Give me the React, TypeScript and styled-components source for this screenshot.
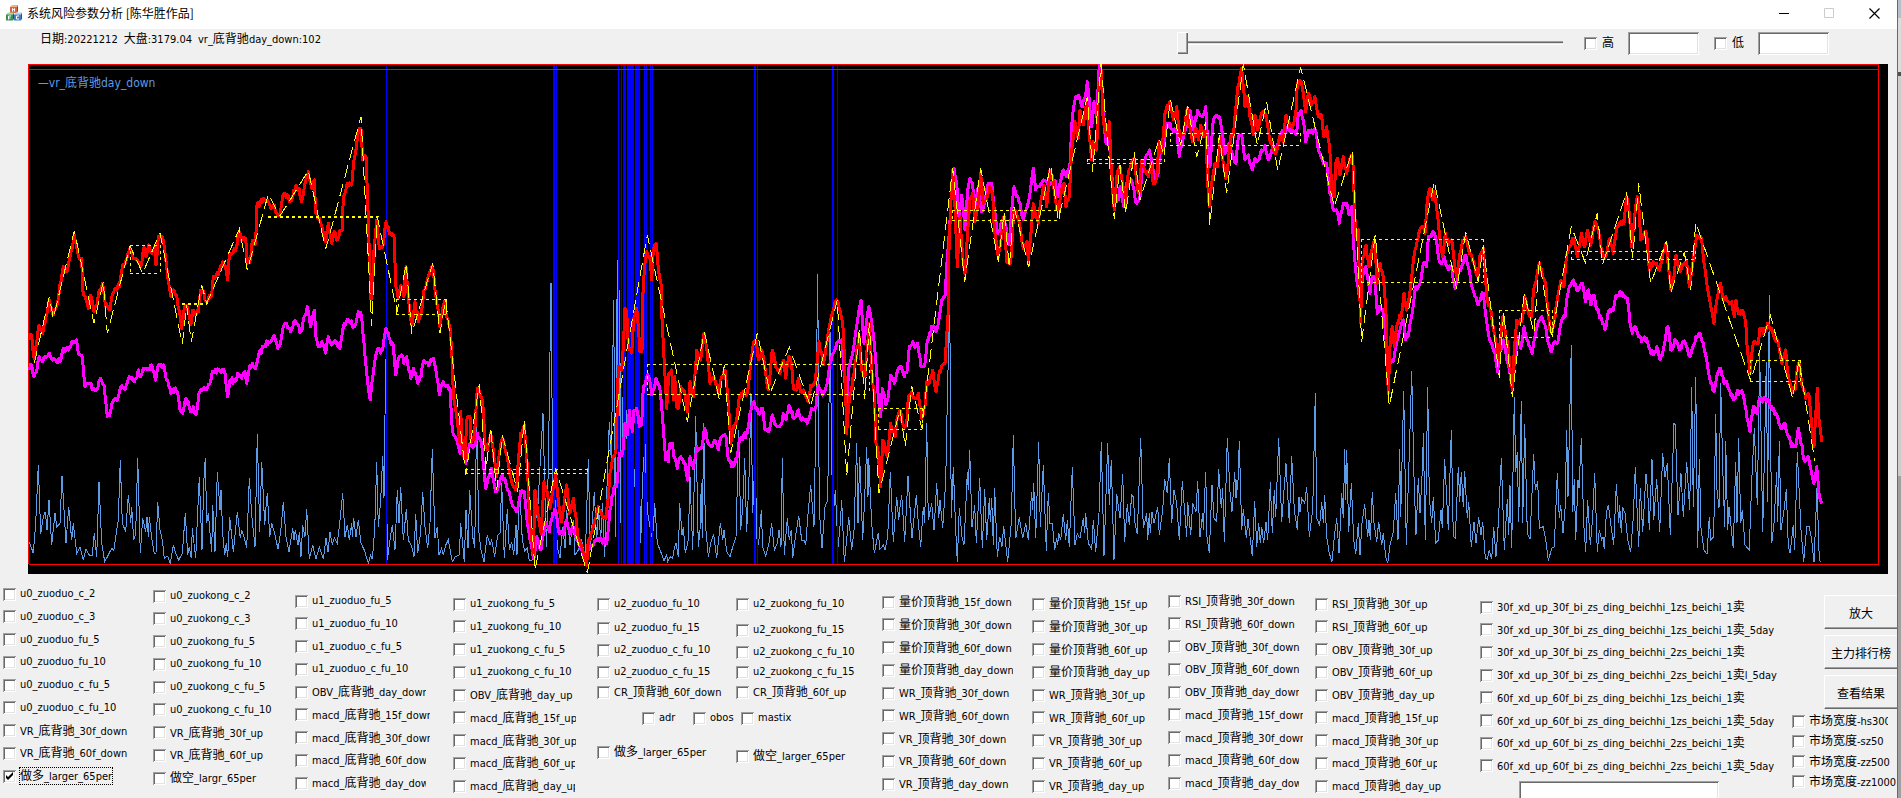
import React from "react";
import styled, { createGlobalStyle, css } from "styled-components";

const GlobalStyle = createGlobalStyle`
  html, body { margin: 0; padding: 0; overflow: hidden; background: #a8a8a8; }
  * { box-sizing: border-box; }
  body, button, input {
    font-family: "DejaVu Sans Condensed", "Noto Sans CJK SC", sans-serif;
    font-size: 11px;
    color: #000;
  }
`;

const sunken = css`
  box-shadow: inset 1px 1px #a0a0a0, inset -1px -1px #fff, inset 2px 2px #696969, inset -2px -2px #e3e3e3;
`;

const Desktop = styled.div`
  display: flex;
  height: 100vh;
`;

const AppWindow = styled.main`
  flex: 1;
  min-width: 0;
  display: flex;
  flex-direction: column;
  background: #f0f0f0;
  overflow: hidden;
`;

const Backdrop = styled.aside`
  width: 4px;
  border-left: 1px solid #696969;
  display: flex;
  flex-direction: column;
`;

const BackdropBand = styled.div<{ $h?: number; $c: string }>`
  background: ${(p) => p.$c};
  ${(p) => (p.$h ? `height: ${p.$h}px;` : "flex: 1;")}
`;

const TitleBar = styled.header`
  height: 29px;
  display: flex;
  align-items: center;
  background: #fff;
  padding: 0 0 3px 6px;
  flex: none;
`;

const Title = styled.h1`
  margin: 0 auto 0 5px;
  font: 400 12px/16px "Noto Sans CJK SC", sans-serif;
`;

const CaptionButton = styled.button`
  width: 45px;
  height: 26px;
  padding: 0;
  border: 0;
  background: none;
  display: grid;
  place-items: center;
`;

const Toolbar = styled.section`
  height: 35px;
  flex: none;
  display: flex;
  align-items: center;
  padding: 0 68px 7px 40px;
`;

const Status = styled.div`
  display: flex;
  align-self: flex-start;
  line-height: 20px;
  white-space: nowrap;
  gap: 6px;
  margin-right: auto;
`;

const Han = styled.span`
  font-size: 12px;
`;

const Slider = styled.input`
  appearance: none;
  width: 386px;
  height: 22px;
  margin: 0 21px 0 0;
  background: none;
  &::-webkit-slider-runnable-track {
    height: 4px;
    border-top: 1px solid #a0a0a0;
    border-bottom: 1px solid #fff;
    background: linear-gradient(#696969 50%, #e3e3e3 50%);
  }
  &::-webkit-slider-thumb {
    appearance: none;
    width: 11px;
    height: 22px;
    margin-top: -10px;
    background: #f0f0f0;
    box-shadow: inset 1px 1px #fff, inset -1px -1px #696969, inset -2px -2px #a0a0a0;
  }
`;

const Limits = styled.div`
  display: flex;
  gap: 15px;
`;

const Limit = styled.div`
  display: flex;
  align-items: center;
`;

const Field = styled.input<{ $w: number }>`
  width: ${(p) => p.$w}px;
  height: 23px;
  border: 0;
  padding: 2px 4px;
  background: #fff;
  ${sunken}
`;

const LimitLabel = styled.label`
  display: flex;
  align-items: center;
  gap: 5px;
  width: 44px;
  font-size: 12px;
  line-height: 16px;
`;

const Box = styled.input`
  appearance: none;
  flex: none;
  width: 13px;
  height: 13px;
  margin: 0;
  background: #fff;
  ${sunken}
  &:checked {
    background: #fff
      url("data:image/svg+xml,%3Csvg xmlns='http://www.w3.org/2000/svg' width='13' height='13'%3E%3Cpath d='M3 5v3l2 2 5-5V2L5 7z'/%3E%3C/svg%3E");
  }
`;

const ChartFrame = styled.section`
  position: relative;
  height: 510px;
  flex: none;
  margin: 0 9px 0 28px;
  background: #000;
`;

const Plot = styled.svg`
  display: block;
  width: 100%;
  height: 100%;
`;

const Legend = styled.span`
  position: absolute;
  left: 10px;
  top: 10px;
  color: #5c9ce6;
  font-size: 12px;
  line-height: 18px;
`;

const Panel = styled.section`
  flex: 1;
  min-height: 0;
  display: grid;
  align-items: start;
  grid-template-columns:
    minmax(0, 150fr) minmax(0, 142fr) minmax(0, 158fr) minmax(0, 144fr) minmax(0, 285fr) minmax(0, 150fr)
    minmax(0, 136fr) minmax(0, 147fr) minmax(0, 165fr) minmax(0, 312fr) minmax(0, 105fr);
  padding-left: 3px;
`;

const Column = styled.div<{ $top: number; $h: number }>`
  display: flex;
  flex-direction: column;
  justify-content: space-between;
  margin-top: ${(p) => p.$top}px;
  height: ${(p) => p.$h}px;
`;

const Option = styled.label`
  display: flex;
  align-items: center;
  gap: 4px;
  height: 14px;
`;

const OptionText = styled.span<{ $clip?: number; $focus?: boolean }>`
  white-space: nowrap;
  line-height: 16px;
  height: 16px;
  ${(p) => p.$clip && `width: ${p.$clip}px; overflow: hidden;`}
  ${(p) => p.$focus && "outline: 1px dotted #000;"}
`;

const Middle = styled.div`
  margin-top: 23px;
`;

const Pair = styled.div`
  display: grid;
  grid-template-columns: minmax(0, 139fr) minmax(0, 146fr);
`;

const Rows = styled.div<{ $rows: string }>`
  display: grid;
  grid-template-rows: ${(p) => p.$rows};
`;

const Breadth = styled.div`
  display: grid;
  grid-template-columns: 51px 48px auto;
  padding: 12px 0 20px 45px;
`;

const Signals = styled.div`
  & > input { margin: 8px 0 0 39px; }
`;

const Actions = styled.div`
  margin-top: 21px;
`;

const ButtonStack = styled.div`
  display: flex;
  flex-direction: column;
  gap: 6px;
  padding-left: 32px;
`;

const PushButton = styled.button`
  height: 34px;
  padding: 0;
  border: solid;
  border-width: 1px 0 1px 1px;
  border-color: #fff #fff #696969;
  background: #f0f0f0;
  box-shadow: inset 0 -1px #a0a0a0;
  font-size: 12px;
  white-space: nowrap;
`;

/* Chinese characters are set one size larger than the Latin text beside them. */
function Mixed({ text }: { text: string }) {
  return (
    <>
      {text
        .split(/([\u4e00-\u9fff]+)/)
        .filter(Boolean)
        .map((part, i) => (/[\u4e00-\u9fff]/.test(part) ? <Han key={i}>{part}</Han> : part))}
    </>
  );
}

type Item = string | { text: string; clip?: number; checked?: boolean };

function Check({ item }: { item: Item }) {
  const o = typeof item === "string" ? { text: item } : item;
  return (
    <Option>
      <Box type="checkbox" defaultChecked={o.checked} />
      <OptionText $clip={o.clip} $focus={o.checked}>
        <Mixed text={o.text} />
      </OptionText>
    </Option>
  );
}

function CheckColumn({ top, items, height = 196 }: { top: number; items: Item[]; height?: number }) {
  return (
    <Column $top={top} $h={height}>
      {items.map((it, i) => (
        <Check key={i} item={it} />
      ))}
    </Column>
  );
}

const u0Long: Item[] = [
  "u0_zuoduo_c_2", "u0_zuoduo_c_3", "u0_zuoduo_fu_5", "u0_zuoduo_fu_10", "u0_zuoduo_c_fu_5", "u0_zuoduo_c_fu_10",
  "VR_底背驰_30f_down", "VR_底背驰_60f_down", { text: "做多_larger_65per", checked: true },
];
const u0Short: Item[] = [
  "u0_zuokong_c_2", "u0_zuokong_c_3", "u0_zuokong_fu_5", "u0_zuokong_fu_10", "u0_zuokong_c_fu_5", "u0_zuokong_c_fu_10",
  "VR_底背驰_30f_up", "VR_底背驰_60f_up", "做空_largr_65per",
];
const u1Long: Item[] = [
  "u1_zuoduo_fu_5", "u1_zuoduo_fu_10", "u1_zuoduo_c_fu_5", "u1_zuoduo_c_fu_10",
  { text: "OBV_底背驰_day_down", clip: 114 }, { text: "macd_底背驰_15f_down", clip: 118 },
  { text: "macd_底背驰_30f_down", clip: 118 }, { text: "macd_底背驰_60f_down", clip: 114 },
  { text: "macd_底背驰_day_down", clip: 114 },
];
const u1Short: Item[] = [
  "u1_zuokong_fu_5", "u1_zuokong_fu_10", "u1_zuokong_c_fu_5", "u1_zuokong_c_fu_10", "OBV_底背驰_day_up",
  { text: "macd_底背驰_15f_up", clip: 106 }, { text: "macd_底背驰_30f_up", clip: 106 },
  { text: "macd_底背驰_60f_up", clip: 105 }, { text: "macd_底背驰_day_up", clip: 105 },
];
const u2Long: Item[] = ["u2_zuoduo_fu_10", "u2_zuoduo_fu_15", "u2_zuoduo_c_fu_10", "u2_zuoduo_c_fu_15", "CR_顶背驰_60f_down"];
const u2Short: Item[] = ["u2_zuokong_fu_10", "u2_zuokong_fu_15", "u2_zuokong_c_fu_10", "u2_zuokong_c_fu_15", "CR_顶背驰_60f_up"];
const volumeDown: Item[] = [
  "量价顶背驰_15f_down", "量价顶背驰_30f_down", "量价顶背驰_60f_down", { text: "量价顶背驰_day_down", clip: 114 },
  "WR_顶背驰_30f_down", "WR_顶背驰_60f_down", "VR_顶背驰_30f_down", "VR_顶背驰_60f_down", "VR_顶背驰_day_down",
];
const volumeUp: Item[] = [
  "量价顶背驰_15f_up", "量价顶背驰_30f_up", "量价顶背驰_60f_up", "量价顶背驰_day_up",
  "WR_顶背驰_30f_up", "WR_顶背驰_60f_up", "VR_顶背驰_30f_up", "VR_顶背驰_60f_up", "VR_顶背驰_day_up",
];
const rsiDown: Item[] = [
  "RSI_顶背驰_30f_down", "RSI_顶背驰_60f_down", "OBV_顶背驰_30f_down", { text: "OBV_顶背驰_60f_down", clip: 114 },
  { text: "OBV_顶背驰_day_down", clip: 114 }, { text: "macd_顶背驰_15f_down", clip: 118 },
  { text: "macd_顶背驰_30f_down", clip: 118 }, { text: "macd_顶背驰_60f_down", clip: 114 },
  { text: "macd_顶背驰_day_down", clip: 114 },
];
const rsiUp: Item[] = [
  "RSI_顶背驰_30f_up", "RSI_顶背驰_60f_up", "OBV_顶背驰_30f_up", "OBV_顶背驰_60f_up", "OBV_顶背驰_day_up",
  { text: "macd_顶背驰_15f_up", clip: 106 }, { text: "macd_顶背驰_30f_up", clip: 106 },
  { text: "macd_顶背驰_60f_up", clip: 105 }, "macd_顶背驰_day_up",
];
const signals: Item[] = [
  "30f_xd_up_30f_bi_zs_ding_beichhi_1zs_beichi_1卖", "30f_xd_up_30f_bi_zs_ding_beichhi_1zs_beichi_1卖_5day",
  "30f_xd_up_30f_bi_zs_ding_beichhi_2zs_beichi_1卖", "30f_xd_up_30f_bi_zs_ding_beichhi_2zs_beichi_1卖l_5day",
  "60f_xd_up_60f_bi_zs_ding_beichhi_1zs_beichi_1卖", "60f_xd_up_60f_bi_zs_ding_beichhi_1zs_beichi_1卖_5day",
  "60f_xd_up_60f_bi_zs_ding_beichhi_2zs_beichi_1卖", "60f_xd_up_60f_bi_zs_ding_beichhi_2zs_beichi_1卖_5day",
];
const breadth: Item[] = [{ text: "市场宽度-hs300", clip: 79 }, "市场宽度-sz50", "市场宽度-zz500", "市场宽度-zz1000"];

/* Chart samples are kept per tile, three units to a chart pixel, measured from the tile's origin. */
type Tile = "a1" | "a2" | "a3" | "a4" | "b1" | "b2" | "b3" | "b4";
const origin: Record<Tile, [number, number]> = {
  a1: [0, 0], a2: [470, 50], a3: [940, 50], a4: [1400, 0],
  b1: [0, 310], b2: [470, 310], b3: [940, 310], b4: [1400, 310],
};
type Run = [Tile, string];
type Point = [number, number];

const decode = (runs: Run[]): Point[] =>
  runs.flatMap(([tile, pts]) =>
    pts.split(" ").map((p): Point => {
      const [x, y] = p.split(",").map(Number);
      return [origin[tile][0] + x / 3, origin[tile][1] + y / 3];
    })
  );

const toPoints = (pts: Point[]) => pts.map(([x, y]) => `${x.toFixed(1)},${y.toFixed(1)}`).join(" ");

/* Adds the bar-to-bar wobble of a daily series between its turning points. */
const wobble = (pts: Point[]): Point[] => {
  let seed = 7;
  const next = () => {
    seed = (seed * 16807) % 2147483647;
    return seed / 2147483647 - 0.5;
  };
  return pts.flatMap(([x, y], i): Point[] => {
    const [nx, ny] = pts[i + 1] ?? [x, y];
    const n = Math.max(1, Math.floor(nx - x));
    return Array.from({ length: n }, (_, k): Point => [
      x + ((nx - x) * k) / n,
      y + ((ny - y) * k) / n + (k ? next() * 6 : 0),
    ]);
  });
};

const indexLine: Run[] = [
  ["b1", "88,90 95,75 102,145 110,100 117,45 128,70 138,20"],
  ["a1", "148,900 160,945 170,920 190,800 202,815 213,755 223,705 232,750 240,780 245,775 248,870 258,900 265,925 272,885 282,935 292,910 298,870 308,850 318,920 330,930 335,890 347,865 358,860 368,795 380,780 390,745 400,775 412,780 422,800 432,740 438,770 446,735 455,760 465,740 468,795 475,710 486,708 493,740 500,800 505,845 513,890 520,870 530,885 537,930 545,985 552,930 560,915 572,975 578,930 585,945 595,935 602,870 612,880 618,905 628,885 635,885 640,830 655,825 665,795 675,795 683,840 688,765 700,755 710,740 718,695 728,720 737,715 742,790 752,775 757,720 767,730 770,620 780,610 790,595 800,600 812,625 820,615 830,640 840,645 848,590 862,585 868,605 878,590 888,555 897,565 905,605 913,560 925,515 935,565 943,540 947,640 958,655 968,690 977,725 985,670 995,730 1003,695 1012,720 1020,690 1027,690 1030,590 1040,555 1055,555 1062,480 1075,395 1083,385 1088,480 1098,470 1103,600 1108,760 1113,900 1117,880 1122,750 1130,660 1138,745 1148,740 1158,665 1168,700 1182,710 1188,860 1195,895 1203,855 1212,890 1218,800 1225,890 1235,975 1245,905 1255,965 1265,930 1272,870 1280,850 1298,800 1305,870 1315,930 1320,980 1333,905 1340,950 1350,985"],
  ["b1", "1355,120 1360,250 1372,330 1380,400 1382,305 1388,430 1395,450 1400,330 1410,320 1410,380"],
  ["b2", "12,390 22,235 38,275 45,400 52,420 62,370 70,420 80,500 85,450 97,385 108,430 118,480 130,530 140,535 145,450 152,370 163,345 170,440 175,530 180,640 190,735 195,540 205,620 213,670 222,515 232,545 240,595 248,540 257,495 265,570 275,635 283,580 290,525 298,610 310,565 318,620 325,690 335,710 345,745 350,765 355,690 370,650 385,590 395,615 408,625 415,560 420,490 430,440 438,420 445,170 455,180 460,110 465,-5 470,5 475,105 485,130 492,20 500,-5 510,125 516,125"],
  ["a2", "518,745 523,660 530,605 540,620 545,690 550,600 558,580 565,655 573,700 575,790"],
  ["b2", "580,100 590,295 597,190 605,180 610,270 614,200 620,290 625,295 632,230 642,240 652,305 660,215 670,260 680,120 692,150 702,70 712,130 720,220 732,200 747,245 755,200 765,180 772,240 778,320 782,400 792,345 800,330 808,260 820,245 832,250 840,180 850,100 858,95 865,150 875,120 887,190 895,240 907,120 917,170 930,190 940,150 947,205 957,140 965,165 970,235 980,240 985,205 992,245 1000,240 1015,275 1022,225 1035,215 1040,170 1047,95 1060,165 1068,110 1078,50 1087,10 1100,-30 1112,10 1120,60 1127,250 1130,370 1137,280 1145,240 1155,160 1168,80 1175,180 1185,200 1190,130 1198,40 1205,180 1213,250 1218,400 1225,430 1232,530 1238,390 1252,440 1262,340 1275,380 1280,330 1290,300 1300,345 1310,345 1315,260 1325,245 1335,265 1345,250 1355,325 1365,290 1370,215 1378,220 1388,180 1398,245 1408,185 1425,160 1430,80 1435,0"],
  ["a3", "27,600 32,470 38,360 45,470 52,650 60,500 68,620 75,670 82,560 90,450 98,430 105,515 115,460 122,370 130,460 140,450 150,410 158,430 163,540 175,620 185,550 192,500 200,635 212,640 222,480 232,500 240,530 250,595 262,575 265,635 272,560 280,460 287,500 295,520 303,450 312,405 320,470 330,360 340,395 350,480 357,480 365,420 372,400 378,470 388,440 395,300 405,215 415,265 420,180 430,225 440,150 447,240 455,330 460,275 470,300 475,130 483,60 490,220 500,260 508,215 515,380 523,480 532,365 540,350 548,400 556,470 565,365 578,330 585,340 590,400 597,430 605,330 615,360 625,380 633,340 640,400 650,385 657,275 665,310 675,190 690,155 700,210 710,170 720,265 732,250 742,175 750,230 758,275 768,235 775,270 782,225 790,260 797,240 803,400 808,470 815,400 825,340 833,350 840,260 850,340 858,385 868,300 873,255 880,260 885,200 893,110 905,55 915,170 922,140 932,210 940,255 945,195 953,240 965,190 978,195 985,240 992,280 1000,300 1010,305 1018,260 1030,275 1038,195 1050,230 1060,225 1068,180 1072,100 1080,90 1090,130 1097,185 1105,130 1115,165 1125,140 1135,200 1145,195 1152,260 1160,230 1170,310 1177,440 1183,440 1187,340 1193,325 1200,375 1210,320 1220,370 1230,325 1238,320 1243,450 1247,560 1255,540 1258,680 1262,820 1266,640 1278,585 1287,650 1295,600 1303,570 1312,700 1320,640 1330,680 1338,790"],
  ["b3", "1340,120 1345,250 1350,110 1357,50 1363,110 1372,40 1385,10"],
  ["a4", "12,880 20,930 28,890 38,800 45,750 55,710 65,680 75,700 82,600 90,565 97,600 103,575 112,640 118,700 128,770 136,700 145,735 155,720 165,800 170,830 180,760 188,720 197,710 205,745 215,765 225,800 235,830 240,765 250,745 255,820 262,900 270,920 280,985"],
  ["b4", "285,80 295,150 300,100 308,20 315,60 325,120 337,240 343,120 350,30 357,40"],
  ["a4", "365,965 375,890 385,935 395,950 400,880 410,830 418,790 427,825 438,860 442,920 450,990 456,1000 465,950 475,880 483,840 492,860 497,790 505,750 520,715 532,770 545,700 553,740 562,690 572,735 585,665 595,690 605,760 615,775 622,750 630,715 640,760 650,680 662,665 672,670 680,590 688,640 695,740 703,660 712,590 718,640 722,720 732,700 740,700 748,810 760,785 770,790 778,810 785,780 798,730 805,800 813,870 822,830 828,765 840,815 850,795 860,785 868,860 875,810 885,740 890,705 905,720 912,790 920,850 932,920 942,970 950,900 962,850 970,900 978,890 985,905 995,905 1003,950 1008,900 1015,940 1028,930 1038,980"],
  ["b4", "1042,120 1050,190 1058,110 1065,95 1075,100 1080,55 1090,70 1103,40 1115,55 1125,90 1135,100 1145,160 1157,120 1163,190 1175,240 1185,240 1190,190 1198,155 1207,230 1217,265 1227,255 1233,320 1242,410 1248,300 1252,235 1258,340 1265,395"],
];

const marketLine: Run[] = [
  ["b1", "88,180 95,165 102,200 110,185 117,140 128,155 135,140 148,130 160,150 180,155 190,115 205,120 215,95 230,90 237,135 247,140 255,230 270,220 280,235 290,240 298,210 312,225 322,320 332,305 338,275 355,260 362,230 375,240 388,200 400,210 410,205 415,180 422,200 430,175 445,175 455,165 467,210 475,165 490,165 500,210 513,250 523,235 532,245 540,300 548,310 556,270 565,275 572,305 580,290 588,315 597,250 615,240 622,235 630,220 637,185 660,180 675,190 683,260 690,210 705,215 713,190 725,205 735,185 740,220 747,180 757,160 767,175 775,140 790,110 805,95 822,75 833,115 843,90 850,50 860,40 872,65 885,30 903,65 912,20 922,-10 932,50 943,0 948,80 955,110 965,95 977,130 985,80 995,105 1005,90 1020,115 1030,50 1045,30 1063,50 1075,5 1085,20 1092,100 1100,190 1111,270 1120,190 1130,125 1148,120 1158,55 1170,90 1180,105 1187,195 1195,145 1205,135 1212,160 1220,140 1232,205 1240,175 1253,220 1263,200 1270,155 1290,160 1300,145 1310,200 1318,255 1330,215 1350,235 1357,360 1370,390 1380,430 1385,400 1397,460 1405,420 1410,400"],
  ["b2", "12,410 22,370 35,400 42,480 48,535 57,500 65,475 77,545 88,520 97,495 108,520 118,545 125,580 140,605 152,545 163,545 172,640 182,700 192,745 200,680 213,720 225,640 238,665 248,610 257,600 265,660 280,675 290,630 300,670 310,650 322,690 335,720 348,760 357,715 370,705 383,685 395,690 410,700 420,600 432,530 440,530 448,430 458,430 465,340 472,375 478,300 487,365 492,300 500,295 508,350 515,345 520,230 530,200 538,205 545,255 558,205 570,240 578,330 587,450 595,455 598,405 607,400 612,440 622,475 632,440 645,460 653,510 660,440 670,475 680,410 695,415 703,355 715,400 725,410 735,390 745,420 755,380 768,380 775,450 785,470 800,450 808,390 832,370 840,310 852,275 865,310 878,295 885,360 895,365 907,315 918,345 932,345 940,310 948,330 957,285 972,325 985,300 995,330 1012,340 1025,295 1038,290 1045,225 1058,255 1072,220 1080,160 1090,130 1100,100 1115,90 1120,150 1130,280 1137,170 1150,120 1160,50 1173,-30 1182,100 1190,30 1197,-10 1207,50 1217,150 1225,265 1232,320 1237,235 1248,285 1255,260 1262,195 1273,220 1280,190 1290,170 1303,200 1312,180 1318,110 1328,95 1338,110 1343,100 1353,170 1365,160 1372,90 1388,50 1398,65 1408,20"],
  ["a3", "5,750 15,740 20,650 27,560 33,450 42,355 50,400 57,500 65,435 75,540 83,420 90,385 97,400 107,470 115,410 125,485 135,450 145,400 155,400 163,480 173,550 183,520 193,500 208,585 215,480 222,410 230,440 240,460 250,510 262,470 270,430 280,355 287,420 298,410 310,390 330,400 345,390 353,440 370,360 380,380 390,340 397,200 405,150 415,135 427,170 433,150 442,95 447,140 455,230 462,155 470,200 478,45 483,60 490,190 498,280 505,240 515,370 523,450 535,450 540,410 552,470 560,400 575,390 590,460 600,440 607,360 615,330 628,300 637,340 645,390 655,370 660,290 670,300 678,230 690,220 700,245 710,240 718,320 730,260 742,230 750,180 760,240 773,180 787,200 797,170 803,280 810,350 820,210 837,200 847,250 855,310 868,280 880,320 888,340 895,260 905,255 915,330 925,315 937,360 945,325 955,330 965,300 975,285 985,330 995,300 1010,290 1020,255 1040,240 1055,235 1070,250 1075,190 1083,180 1090,210 1097,275 1105,240 1118,250 1127,240 1135,300 1150,340 1160,340 1170,430 1180,480 1190,480 1198,520 1208,470 1220,460 1227,495 1235,470 1242,600 1250,690 1258,740 1268,680 1277,650 1290,730 1297,680 1305,690 1312,790 1322,770 1330,780"],
  ["b3", "1340,120 1350,160 1363,140 1375,80 1390,30 1397,90 1408,60 1418,0"],
  ["a4", "45,870 60,850 70,790 80,800 85,710 93,710 100,695 110,725 118,785 125,790 133,770 145,810 155,800 165,865 175,820 188,795 195,765 205,800 213,850 225,890 235,915 250,880 258,950 265,1000"],
  ["b4", "275,100 285,130 293,185 300,120 310,90 320,150 335,220 345,150 355,80 362,115 372,50 383,90 397,130 405,80 415,35 425,20 437,50 445,100 455,125 465,95 475,90 483,40 495,20"],
  ["a4", "500,900 508,860 520,840 530,870 547,850 557,905 565,870 572,915 582,885 592,930 605,960 615,990 625,935 640,930 648,885 660,875 670,890 682,895 690,970"],
  ["b4", "697,70 705,50 725,95 740,85 750,120 760,135 770,110 780,150 790,120 800,55 806,60 812,120 828,90 840,120 850,95 862,115 870,140 878,110 888,80 900,70 910,100 920,150 930,210 942,245 950,200 962,175 972,220 980,215 990,245 1000,270 1010,250 1028,250 1038,300 1050,365 1060,290 1072,310 1078,265 1095,270 1105,270 1118,300 1133,320 1143,355 1155,340 1165,380 1175,410 1187,410 1195,355 1203,400 1213,450 1225,440 1233,480 1242,520 1250,470 1258,560 1267,573"],
];

const signalLine: Run[] = [
  ["b1", "88,695 100,730 107,640 115,465 122,672 130,620 136,605 141,660 147,570 155,705 165,610 170,650 180,640 186,497 198,700 206,590 215,690 220,640 230,730 240,710 250,750 258,718 268,735 277,735 283,668 290,740 297,516 305,700 314,755 325,735 335,715 341,722 350,660 355,630 361,450 367,640 377,665 385,555 392,640 395,590 401,690 407,670 413,443 421,730 428,625 437,665 441,620 445,680 448,620 455,685 463,730 468,730 473,575 480,660 487,690 493,745 503,738 511,762 520,705 527,730 536,750 547,730 556,610 563,735 568,710 574,745 577,655 587,745 593,605 598,500 606,720 611,520 616,443 620,640 625,610 635,725 638,585 645,725 652,485 660,600 663,540 668,670 674,735 679,700 683,742 689,620 700,725 712,605 721,685 725,660 732,680 740,715 748,505 756,625 765,710 772,372 779,665 785,455 794,645 798,590 802,548 809,680 815,640 824,670 834,718 842,665 850,575 858,680 867,725 878,655 882,690 886,660 894,705 898,665 903,740 908,645 915,680 920,598 928,748 938,705 948,748 958,710 970,748 978,685 984,725 990,665 997,705 1003,683 1012,700 1018,650 1028,550 1035,680 1042,645 1048,690 1055,640 1057,680 1061,625 1068,680 1075,630 1083,700 1093,720 1105,760 1112,735 1117,748 1124,660 1130,455 1135,650 1142,570 1148,438 1152,565 1157,147 1162,750 1170,690 1177,645 1185,720 1192,540 1197,640 1202,530 1210,690 1219,598 1225,690 1235,710 1242,740 1247,612 1253,730 1262,665 1268,545 1275,650 1283,715 1290,640 1297,417 1305,685 1312,650 1317,735 1325,715 1330,735 1337,705 1345,690 1357,755 1366,740 1378,735 1382,640 1393,755 1398,600 1404,715 1409,540"],
  ["b2", "3,600 8,680 14,715 20,310 26,660 32,715 42,755 52,675 60,705 65,690 74,740 83,675 90,670 95,520 103,745 112,598 118,720 125,695 131,735 138,645 141,735 149,540 157,690 164,722 172,715 178,752 186,750 193,650 203,600 210,470 219,310 226,600 230,710 236,400 243,-80 248,500 252,640 256,570 262,710 270,745 278,650 285,715 290,600 300,705 310,630 315,735 325,720 335,690 346,745 350,600 355,447 361,720 373,547 380,690 386,600 392,690 397,578 404,740 412,500 418,335 424,450 431,-30 436,680 442,-150 446,500 449,-60 452,640 457,260 463,600 470,300 475,650 485,300 494,530 503,200 512,700 518,500 525,400 532,600 538,640 545,680 550,660 554,580 562,700 572,725 582,752 590,735 593,755 600,740 608,745 613,715 618,700 625,740 629,580 636,675 640,650 646,730 655,690 660,500 668,720 677,318 685,710 690,660 694,520 697,685 701,340 706,640 715,740 722,700 731,672 740,745 751,640 758,690 762,660 770,725 780,740 790,705 798,680 806,360 812,660 818,590 824,445 830,665 838,480 843,250 848,610 855,440 862,720 868,680 874,600 878,710 887,738 897,700 905,640 913,720 922,700 927,660 933,710 937,445 943,735 952,625 958,690 964,660 968,745 975,690 986,618 995,690 1003,690 1007,705 1015,600 1022,525 1032,650 1038,300 1043,-108 1048,600 1056,715 1065,590 1073,570 1080,60 1088,640 1096,540 1104,710 1110,650 1115,570 1123,757 1130,690 1136,620 1145,720 1152,660 1160,400 1164,640 1169,440 1178,690 1184,560 1190,410 1194,560 1196,445 1205,640 1213,730 1225,668 1230,718 1240,705 1245,720 1253,680 1261,485 1270,695 1280,560 1286,630 1290,590 1295,555 1304,695 1314,498 1326,685 1339,555 1345,640 1352,710 1360,590 1364,640 1370,340 1375,630 1385,580 1392,660 1400,520 1406,625"],
  ["b3", "0,570 8,655 17,515 22,270 29,-30 34,625 40,470 47,660 52,755 58,595 66,680 72,705 82,487 85,540 89,420 96,650 104,585 109,700 119,505 127,715 134,538 140,690 148,565 151,635 155,565 160,705 164,535 172,740 179,680 186,710 191,648 203,755 214,640 220,375 227,685 238,622 248,685 257,640 265,690 275,545 278,600 281,520 287,685 296,396 301,650 310,465 319,722 325,550 330,640 337,640 344,720 350,685 353,705 356,668 362,690 370,612 377,690 382,630 388,710 397,470 405,705 412,672 420,685 430,625 434,670 437,610 445,700 455,718 460,630 467,725 477,610 484,396 492,738 503,398 508,585 514,450 522,750 530,552 540,625 548,492 554,695 562,583 568,645 575,555 580,560 585,640 592,672 602,385 610,655 620,610 623,690 628,610 631,670 636,605 642,640 653,590 658,675 668,600 674,508 682,550 688,445 695,640 702,540 710,580 718,690 727,513 740,680 743,575 752,675 758,580 768,605 773,513 780,680 788,610 790,660 797,485 801,680 808,728 816,525 822,625 830,635 836,477 844,595 848,535 853,695 862,385 870,545 876,605 884,487 888,565 890,510 893,540 898,393 905,660 910,598 919,685 924,628 937,738 944,573 950,710 956,640 961,700 965,650 971,700 978,635 983,690 991,517 997,670 1003,540 1007,620 1016,385 1025,635 1038,460 1048,640 1055,438 1063,600 1072,660 1077,560 1080,605 1085,565 1094,580 1100,530 1108,680 1118,600 1126,250 1130,625 1139,645 1145,575 1150,640 1154,555 1160,680 1168,730 1176,755 1183,680 1190,625 1197,730 1205,550 1210,625 1214,418 1217,570 1220,420 1226,665 1234,520 1241,690 1247,733 1255,640 1260,735 1266,640 1274,583 1283,680 1287,630 1291,690 1297,545 1302,640 1310,695 1316,635 1325,705 1330,668 1337,740 1343,760 1350,705 1360,665 1367,550 1374,690 1379,417 1382,620 1391,243 1399,705 1408,430 1415,183 1422,500 1428,675 1435,505"],
  ["b4", "60,610 68,460 70,370 76,690 83,230 88,560 95,640 100,560 107,700 115,690 123,600 127,655 134,448 145,660 154,360 160,680 166,685 175,470 179,575 184,485 190,590 194,483 202,625 206,575 214,710 222,635 228,700 236,622 243,675 248,635 256,745 262,748 268,720 275,748 281,650 288,740 295,640 304,445 313,720 322,568 326,675 330,525 335,715 343,262 347,485 352,425 356,635 364,273 368,640 374,343 382,670 390,688 401,433 406,540 413,513 418,655 430,650 437,690 445,752 455,715 463,710 472,490 478,625 482,585 489,670 495,600 500,360 504,560 514,105 518,605 523,508 527,690 534,510 537,535 544,385 551,640 557,725 563,570 571,705 578,620 584,490 592,725 598,660 605,690 609,680 613,718 619,610 625,585 632,640 641,705 649,523 656,640 659,585 664,668 668,592 675,610 683,690 692,727 700,620 706,472 716,712 721,535 728,665 738,492 743,540 748,660 756,448 761,630 770,508 779,665 788,430 795,500 802,460 811,675 822,340 826,345 834,615 843,490 850,620 860,455 869,600 875,230 880,590 887,200 893,715 898,448 903,655 912,720 921,733 928,620 932,690 941,680 947,312 951,540 957,595 962,220 968,470 974,650 977,393 983,660 987,590 1000,715 1007,455 1011,640 1016,385 1022,640 1027,600 1035,705 1048,720 1055,515 1063,355 1072,585 1079,130 1088,665 1094,400 1099,155 1103,575 1108,-45 1115,700 1122,640 1130,485 1133,635 1138,393 1143,660 1152,600 1159,538 1165,710 1170,730 1180,645 1184,720 1192,425 1203,660 1211,755 1220,650 1228,650 1235,690 1242,757 1251,535 1258,750 1262,755"],
];

const zigzag: Run[] = [
  ["a1", "103,1090 148,890 160,955 223,692 282,970 310,845 322,1000 390,738 428,820 480,698 547,1032 560,915 574,1027 605,855 620,910 718,687 742,810 805,583 840,648 925,512 977,748 1083,350 1115,977 1132,650 1191,937 1219,790 1235,1002 1298,790 1320,1000 1337,898"],
  ["b1", "1397,495"],
  ["b2", "28,222 48,480 62,355 80,540 97,375 143,545 163,330 195,780 257,475 352,790"],
  ["a2", "532,555"],
  ["b2", "652,335 703,65 748,268 763,165 782,430 862,70 900,250 958,112 1022,290 1102,-30 1130,500 1168,55 1184,268 1198,40 1227,548 1290,298 1306,410 1325,228 1355,355"],
  ["a3", "38,355 74,695 122,355 175,635 193,485 208,652 222,470 266,652 332,345 355,510 442,140 458,367 483,42 523,507 540,345 557,490 583,307 600,450 658,265 672,320 691,148 722,285 743,167 770,322 797,215 809,525 838,255 860,430 910,42 952,285 980,155 1013,362 1082,52 1183,470 1237,302 1265,875 1306,553"],
  ["b3", "1348,288"],
  ["a4", "103,545 170,867 197,697 235,845 250,735 298,1133 311,935 337,1190 373,880 402,1000 418,782 455,1010 514,680 556,787 592,640 608,793 680,577 698,775 716,550 752,850 800,722 812,880 853,757 872,870 887,668"],
  ["b4", "1052,213 1111,15 1178,265 1197,150 1244,452"],
];

/* Consolidation zones: x, y, width, height */
const zones = [
  [130, 245, 30, 28], [182, 303, 25, 1], [268, 216, 110, 1], [396, 299, 50, 15], [465, 469, 122, 4],
  [647, 364, 222, 30], [878, 408, 44, 21], [952, 210, 107, 10], [1087, 159, 77, 4], [1170, 133, 130, 12],
  [1361, 239, 122, 43], [1499, 310, 53, 27], [1571, 251, 124, 8], [1750, 360, 50, 21],
];

/* Signal days: x, width */
const bars = [
  [386, 1], [553, 2], [556, 1], [618, 1], [621, 1], [623, 3], [627, 7], [635, 5], [644, 1],
  [646, 1], [650, 1], [652, 1], [754, 2], [757, 1], [832, 2], [837, 1],
];

function Chart() {
  return (
    <ChartFrame aria-label="vr_底背驰day_down">
      <Plot viewBox="28 64 1860 510" preserveAspectRatio="none" shapeRendering="crispEdges" fill="none">
        <polyline points={toPoints(decode(signalLine))} stroke="#5c9ce6" />
        {bars.map(([x, w]) => (
          <rect key={x} x={x} y="65" width={w} height="499" fill="#00f" />
        ))}
        <path d="M28.5 564V64.5H1878.5V564.5H28.5M28 69.5H1878" stroke="#f00" />
        <polyline points={toPoints(wobble(decode(marketLine)))} stroke="#f0f" strokeWidth="3" strokeLinejoin="round" />
        <polyline points={toPoints(wobble(decode(indexLine)))} stroke="#f00" strokeWidth="3" strokeLinejoin="round" />
        <polyline points={toPoints(decode(zigzag))} stroke="#ff0" strokeDasharray="13 6" />
        {zones.map(([x, y, w, h]) => (
          <path
            key={x}
            d={`M${x} ${y + 0.5}h${w}M${x} ${y + h + 0.5}h${w}M${x + 0.5} ${y}v${h}M${x + w + 0.5} ${y}v${h}`}
            stroke="#ff0"
            strokeDasharray="3 3"
          />
        ))}
      </Plot>
      <Legend>—vr_底背驰day_down</Legend>
    </ChartFrame>
  );
}

function Cube({ x, y, top, face, side, mark }: { x: number; y: number; top: string; face: string; side: string; mark: string }) {
  return (
    <g transform={`translate(${x} ${y})`}>
      <path d="M0 2 2 0h6l-1 2z" fill={top} />
      <path d="M7 2 8 0v6L7 8z" fill={side} />
      <path d="M0 2h7v6H0z" fill={face} />
      <path d={mark} stroke="#fff" fill="none" />
    </g>
  );
}

function AppIcon() {
  return (
    <svg width="16" height="16" viewBox="0 0 16 16" aria-hidden="true">
      <Cube x={4} y={0} top="#f3b08c" face="#d9653a" side="#8f3f22" mark="M2.500 6.500v-3l1 1 1-1v3" />
      <Cube x={0} y={7.5} top="#a9d6a4" face="#3d8f56" side="#22593a" mark="M2.500 7v-3.500h2.500M2.500 5.500h2" />
      <Cube x={8} y={7.5} top="#b5d3f2" face="#3f7fc4" side="#2a4f80" mark="M5 3.500h-2.500v3h2.500" />
    </svg>
  );
}

export default function App() {
  return (
    <Desktop>
      <GlobalStyle />
      <AppWindow>
        <TitleBar>
          <AppIcon />
          <Title>系统风险参数分析 [陈华胜作品]</Title>
          <CaptionButton aria-label="最小化">
            <svg width="11" height="11"><path d="M0 5.500h10" stroke="#000" /></svg>
          </CaptionButton>
          <CaptionButton aria-label="最大化" disabled>
            <svg width="11" height="11"><path d="M.5.500h9v9h-9z" stroke="#ccc" fill="none" /></svg>
          </CaptionButton>
          <CaptionButton aria-label="关闭">
            <svg width="11" height="11"><path d="M.5.500l10 10m0-10l-10 10" stroke="#000" strokeWidth="1.200" /></svg>
          </CaptionButton>
        </TitleBar>
        <Toolbar>
          <Status>
            <span><Mixed text="日期:20221212" /></span>
            <span><Mixed text="大盘:3179.04" /></span>
            <span><Mixed text="vr_底背驰day_down:102" /></span>
          </Status>
          <Slider type="range" aria-label="日期位置" min={0} max={100} defaultValue={0} />
          <Limits>
            <Limit>
              <LimitLabel><Box type="checkbox" />高</LimitLabel>
              <Field $w={71} aria-label="高" />
            </Limit>
            <Limit>
              <LimitLabel><Box type="checkbox" />低</LimitLabel>
              <Field $w={71} aria-label="低" />
            </Limit>
          </Limits>
        </Toolbar>
        <Chart />
        <Panel>
          <CheckColumn top={13} items={u0Long} />
          <CheckColumn top={15} items={u0Short} />
          <CheckColumn top={20} items={u1Long} />
          <CheckColumn top={23} items={u1Short} />
          <Middle>
            <Pair>
              <Rows $rows="24px 22px 22px 20px 14px">
                {u2Long.map((it, i) => <Check key={i} item={it} />)}
              </Rows>
              <Rows $rows="26px 22px 20px 20px 14px">
                {u2Short.map((it, i) => <Check key={i} item={it} />)}
              </Rows>
            </Pair>
            <Breadth>
              <Check item="adr" />
              <Check item="obos" />
              <Check item="mastix" />
            </Breadth>
            <Pair>
              <Column $top={0} $h={14}><Check item="做多_larger_65per" /></Column>
              <Column $top={4} $h={14}><Check item="做空_larger_65per" /></Column>
            </Pair>
          </Middle>
          <CheckColumn top={21} items={volumeDown} />
          <CheckColumn top={23} items={volumeUp} />
          <CheckColumn top={20} items={rsiDown} />
          <CheckColumn top={23} items={rsiUp} />
          <Signals>
            <CheckColumn top={26} items={signals} height={173} />
            <Field $w={200} aria-label="结果" />
          </Signals>
          <Actions>
            <ButtonStack>
              <PushButton>放大</PushButton>
              <PushButton>主力排行榜</PushButton>
              <PushButton>查看结果</PushButton>
            </ButtonStack>
            <CheckColumn top={5} items={breadth} height={75} />
          </Actions>
        </Panel>
      </AppWindow>
      <Backdrop>
        <BackdropBand $h={18} $c="#b4c0cc" />
        <BackdropBand $h={54} $c="#dcdcdc" />
        <BackdropBand $h={4} $c="#505050" />
        <BackdropBand $h={400} $c="#cdcdcd" />
        <BackdropBand $c="#a0a0a0" />
      </Backdrop>
    </Desktop>
  );
}
